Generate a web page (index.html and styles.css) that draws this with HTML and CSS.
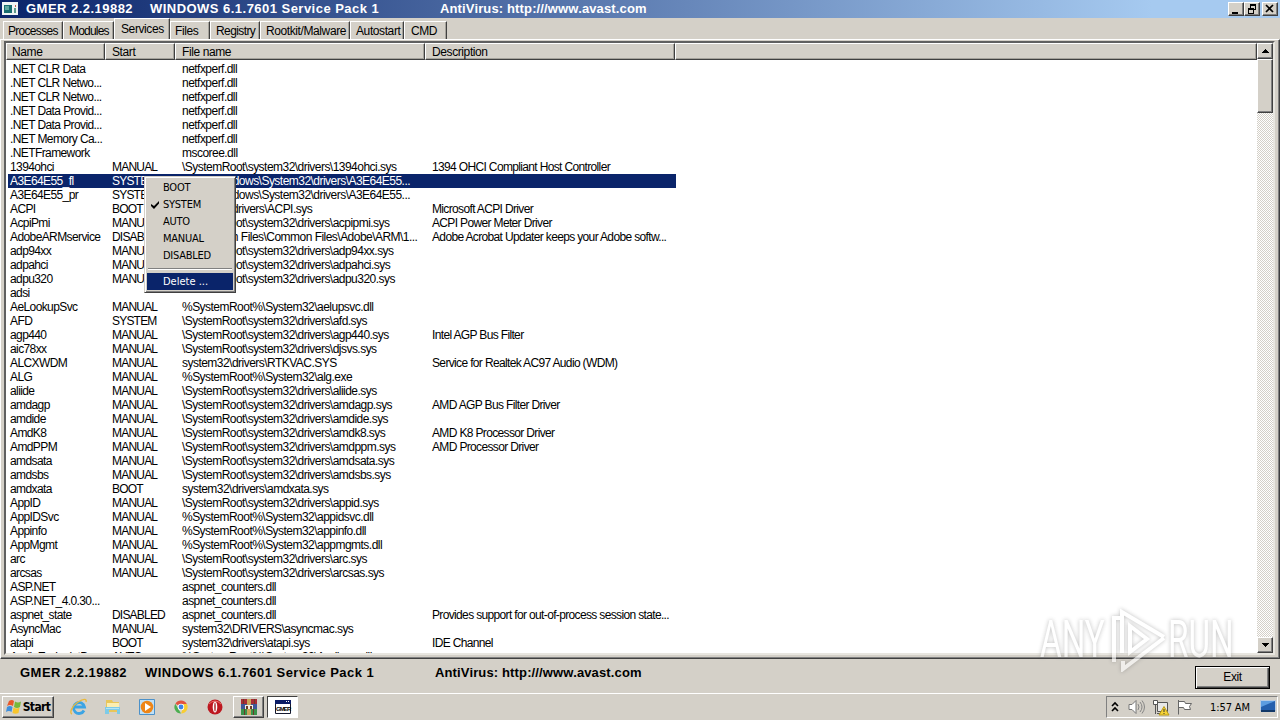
FILE: index.html
```html
<!DOCTYPE html>
<html lang="en">
<head>
  <meta charset="UTF-8">
  <title>GMER 2.2.19882</title>
  <link rel="stylesheet" href="styles.css">
</head>
<body>

<header class="titlebar">
  <svg class="app-icon" width="16" height="14" viewBox="0 0 16 14"><path fill="#eef4f4" d="M0 0h16v13H0z"/><path fill="#176d70" d="M2 3h8v8H2z"/><path fill="#5ea9a0" d="M3 4h4v4H3z"/><path fill="#c65a4a" d="M13 3h1v2h-1z"/><path fill="#5f9b8c" d="M12 6h2v5h-2z"/></svg>
  <span class="t-app">GMER 2.2.19882</span>
  <span class="t-os">WINDOWS 6.1.7601 Service Pack 1</span>
  <span class="t-av">AntiVirus: http:///www.avast.com</span>
  <div class="win-buttons">
    <button><svg width="12" height="10"><path d="M2 8h6v2H2z"/></svg></button>
    <button><svg width="12" height="10"><path d="M4 0h6v6H8v4H2V4h2zM5 2v2h3v1h1V2zM3 6v3h4V6z" fill-rule="evenodd"/></svg></button>
    <button class="close"><svg width="12" height="10"><path d="M2 1l7 7M9 1L2 8" stroke="#000" stroke-width="1.7"/></svg></button>
  </div>
</header>

<!-- Tabs -->
<nav class="tabs">
  <div class="tab processes">Processes</div>
  <div class="tab modules">Modules</div>
  <div class="tab services active">Services</div>
  <div class="tab files">Files</div>
  <div class="tab registry">Registry</div>
  <div class="tab rootkit">Rootkit/Malware</div>
  <div class="tab autostart">Autostart</div>
  <div class="tab cmd">CMD</div>
</nav>

<!-- Services list -->
<main class="page">
  <div class="listview">
    <div class="list">
      <div class="list-head">
        <div>Name</div><div>Start</div><div>File name</div><div>Description</div><div></div>
      </div>
      <div id="rows" class="rows"></div>
    </div>
    <div class="scrollbar">
      <div class="sb-btn"><svg width="7" height="4"><path d="M3 0h1v1h1v1h1v1h1v1H0V3h1V2h1V1h1z"/></svg></div>
      <div class="thumb"></div>
      <div class="sb-btn down"><svg width="7" height="4"><path d="M0 0h7v1H6v1H5v1H4v1H3V3H2V2H1V1H0z"/></svg></div>
    </div>
  </div>
</main>

<footer class="status">
  <span class="t-app">GMER 2.2.19882</span>
  <span class="t-os">WINDOWS 6.1.7601 Service Pack 1</span>
  <span class="t-av">AntiVirus: http:///www.avast.com</span>
  <button class="exit">Exit</button>
</footer>

<!-- Taskbar -->
<div class="taskbar">
  <button class="start">
    <svg width="16" height="16" viewBox="0 0 16 16"><path fill="#e8582a" d="M3 2q3-2 5 0L7 7Q4 5 1 7z"/><path fill="#77b83a" d="M9 2.500q3 2 6 0L14 8q-3 2-6 0z"/><path fill="#3f8fdc" d="M1 8q3-2 5.500 0L5.500 13Q3 11 0 13z"/><path fill="#f8c52c" d="M7.500 8.500q3 2 6 0L12.500 14q-3 1.500-6 0z"/></svg>
    Start
  </button>
  <div class="quick">
    <svg width="18" height="18" viewBox="0 0 18 18"><path d="M14 12.500A5.500 5.500 0 1 1 14.500 9H5" fill="none" stroke="#3ba4e4" stroke-width="2.800"/><path d="M2 16C-1 15 2 8 8 4s9-3 8 0" fill="none" stroke="#e9b93d" stroke-width="1.400"/></svg>
    <svg width="18" height="18" viewBox="0 0 18 18"><path fill="#e8c65a" d="M2 2h6l1 2h6v10H2z"/><path fill="#fbeeb0" d="M3 5h12v4H3z"/><path fill="#7dcbe8" d="M1 9h15v7h-3v-4H5v4H1z"/><path fill="#b5e4f5" d="M2 10h13v1H2z"/></svg>
    <svg width="18" height="18" viewBox="0 0 18 18"><path fill="#bfe0f7" stroke="#4c91c9" d="M1.500 1.500h15v15h-15z"/><circle cx="9" cy="9" r="6.300" fill="#ee8517"/><path fill="#fff" d="M7 5l6 4-6 4z"/></svg>
    <svg width="18" height="18" viewBox="0 0 18 18"><path fill="#e2523f" d="M9 9L3.400 5.700A6.500 6.500 0 0 1 14.800 6H9z"/><path fill="#4cae50" d="M3.300 5.700L9 15.500A6.500 6.500 0 0 1 3.300 5.700z"/><path fill="#f8cd32" d="M14.900 6A6.500 6.500 0 0 1 9 15.500L11.500 9 9 6z"/><circle cx="9" cy="9" r="3.200" fill="#fff"/><circle cx="9" cy="9" r="2.400" fill="#3c83e8"/></svg>
    <svg width="18" height="18" viewBox="0 0 18 18"><circle cx="9" cy="9" r="7.500" fill="#bd1820"/><path d="M3 6q6-6 12 0" stroke="#ec6e68" fill="none"/><ellipse cx="9" cy="9" rx="2.300" ry="5.500" fill="#fff"/><ellipse cx="9" cy="9" rx=".8" ry="4.500" fill="#ad3333"/></svg>
  </div>
  <button class="task"><svg width="18" height="18" viewBox="0 0 18 18"><path fill="#a72c35" d="M1 1h16v5H1z"/><path fill="#3d5799" d="M1 6h16v5H1z"/><path fill="#39934a" d="M1 11h16v6H1z"/><path fill="#c9a55b" d="M7 1h4v16H7z"/><path fill="#f2eee2" d="M5 7h8v4H5z"/><path fill="#6a3a2a" d="M6 8h2v3H6zM10 8h2v3h-2zM3 1h1v5H3zM14 1h1v5h-1zM4 11h1v6H4zM13 11h1v6h-1z"/></svg></button>
  <button class="task pressed"><svg width="18" height="18" viewBox="0 0 18 18"><path fill="#fff" stroke="#15192e" d="M1.500 2.500h15v13h-15z"/><path fill="#0b1c66" d="M1 2h16v4H1z"/><path fill="#fff" d="M12 3h1v1h-1zM14 3h1v1h-1z"/><text x="2" y="13" class="mini">GMER</text></svg></button>
  <div class="tray">
    <svg width="8" height="12"><path d="M1 5l3-3 3 3M1 10l3-3 3 3" fill="none" stroke="#000" stroke-width="1.600"/></svg>
    <svg class="sound" width="18" height="16" viewBox="0 0 18 16"><path fill="#fff" stroke="#777" d="M1 5.500h3l4-4v13l-4-4H1z"/><path d="M10 5q2 3 0 6M12 3q4 5 0 10M14 1.500q5 6.500 0 13" fill="none" stroke="#858585"/></svg>
    <svg class="net" width="18" height="17" viewBox="0 0 18 17"><path fill="#e8e8e8" stroke="#555" d="M5.500 3.500h10v9h-10z"/><path fill="#fff" stroke="#555" d="M1.500 1.500h4v4h-4zM3.500 6v9M5 14.500h6"/><path fill="#f6d338" stroke="#b99a16" d="M12 7.500l5 8.500H7z"/><path fill="#333" d="M11.500 10h1v3h-1zM11.500 14h1v1h-1z"/></svg>
    <svg class="flag" width="17" height="16" viewBox="0 0 17 16"><path fill="#fff" stroke="#666" d="M1.500 1v14.500M1.500 2.500h6l1 2h6l-2 3 1 3H7.500l-1-2h-5"/></svg>
    <span class="clock">1:57 AM</span>
    <svg class="desktop" width="16" height="14" viewBox="0 0 16 14"><path fill="#245fae" stroke="#b8cbe2" d="M.5.500h15v10H.5z"/><path fill="#5c9ce1" d="M1 1h14L1 7z"/><path fill="#123868" d="M1 10h14v2H1z"/></svg>
  </div>
</div>

<!-- Start type menu -->
<div class="menu">
  <div class="item">BOOT</div>
  <div class="item"><svg class="check" width="8" height="8"><path d="M0 3l3 2 5-5v2.500L3 8 0 5z"/></svg>SYSTEM</div>
  <div class="item">AUTO</div>
  <div class="item">MANUAL</div>
  <div class="item">DISABLED</div>
  <div class="sep"></div>
  <div class="item hot">Delete ...</div>
</div>

<div class="watermark">
  <span class="wm">ANY</span>
  <svg width="62" height="64" viewBox="0 0 62 64"><path d="M15 10H8v44M16 45V4l42 25M58 30L17 61V53M24 18v26l17-13z" fill="none" stroke="#fff" stroke-width="4"/></svg>
  <span class="wm">RUN</span>
</div>

<script>
  const R = "\\SystemRoot\\system32\\drivers\\";
  const S = "system32\\drivers\\";
  const P = "%SystemRoot%\\System32\\";
  const services = [
    [".NET CLR Data", "", "netfxperf.dll"],
    [".NET CLR Netwo...", "", "netfxperf.dll"],
    [".NET CLR Netwo...", "", "netfxperf.dll"],
    [".NET Data Provid...", "", "netfxperf.dll"],
    [".NET Data Provid...", "", "netfxperf.dll"],
    [".NET Memory Ca...", "", "netfxperf.dll"],
    [".NETFramework", "", "mscoree.dll"],
    ["1394ohci", "MANUAL", R + "1394ohci.sys", "1394 OHCI Compliant Host Controller"],
    ["A3E64E55_fl", "SYSTEM", "\\??\\C:\\Windows\\System32\\drivers\\A3E64E55..."],
    ["A3E64E55_pr", "SYSTEM", "\\??\\C:\\Windows\\System32\\drivers\\A3E64E55..."],
    ["ACPI", "BOOT", S + "ACPI.sys", "Microsoft ACPI Driver"],
    ["AcpiPmi", "MANUAL", R + "acpipmi.sys", "ACPI Power Meter Driver"],
    ["AdobeARMservice", "DISABLED", "C:\\Program Files\\Common Files\\Adobe\\ARM\\1...", "Adobe Acrobat Updater keeps your Adobe softw..."],
    ["adp94xx", "MANUAL", R + "adp94xx.sys"],
    ["adpahci", "MANUAL", R + "adpahci.sys"],
    ["adpu320", "MANUAL", R + "adpu320.sys"],
    ["adsi"],
    ["AeLookupSvc", "MANUAL", P + "aelupsvc.dll"],
    ["AFD", "SYSTEM", R + "afd.sys"],
    ["agp440", "MANUAL", R + "agp440.sys", "Intel AGP Bus Filter"],
    ["aic78xx", "MANUAL", R + "djsvs.sys"],
    ["ALCXWDM", "MANUAL", S + "RTKVAC.SYS", "Service for Realtek AC97 Audio (WDM)"],
    ["ALG", "MANUAL", P + "alg.exe"],
    ["aliide", "MANUAL", R + "aliide.sys"],
    ["amdagp", "MANUAL", R + "amdagp.sys", "AMD AGP Bus Filter Driver"],
    ["amdide", "MANUAL", R + "amdide.sys"],
    ["AmdK8", "MANUAL", R + "amdk8.sys", "AMD K8 Processor Driver"],
    ["AmdPPM", "MANUAL", R + "amdppm.sys", "AMD Processor Driver"],
    ["amdsata", "MANUAL", R + "amdsata.sys"],
    ["amdsbs", "MANUAL", R + "amdsbs.sys"],
    ["amdxata", "BOOT", S + "amdxata.sys"],
    ["AppID", "MANUAL", R + "appid.sys"],
    ["AppIDSvc", "MANUAL", P + "appidsvc.dll"],
    ["Appinfo", "MANUAL", P + "appinfo.dll"],
    ["AppMgmt", "MANUAL", P + "appmgmts.dll"],
    ["arc", "MANUAL", R + "arc.sys"],
    ["arcsas", "MANUAL", R + "arcsas.sys"],
    ["ASP.NET", "", "aspnet_counters.dll"],
    ["ASP.NET_4.0.30...", "", "aspnet_counters.dll"],
    ["aspnet_state", "DISABLED", "aspnet_counters.dll", "Provides support for out-of-process session state..."],
    ["AsyncMac", "MANUAL", "system32\\DRIVERS\\asyncmac.sys"],
    ["atapi", "BOOT", S + "atapi.sys", "IDE Channel"],
    ["AudioEndpointBu...", "AUTO", P + "Audiosrv.dll"]
  ];

  const rows = document.getElementById("rows");
  services.forEach(s => {
    const row = document.createElement("div");
    row.className = s[0] === "A3E64E55_fl" ? "row selected" : "row";
    for (let i = 0; i < 4; i++) {
      const cell = document.createElement("span");
      cell.textContent = s[i] || "";
      row.appendChild(cell);
    }
    rows.appendChild(row);
  });
</script>

</body>
</html>
```
FILE: styles.css
```css
* { box-sizing: border-box; }
body { margin: 0; width: 1280px; height: 720px; overflow: hidden; display: flex; flex-direction: column; background: #d4d0c8; color: #000; font: 12px/14px "Liberation Sans", sans-serif; letter-spacing: -0.4px; white-space: nowrap; }
svg { display: block; flex: none; }
button { font: inherit; letter-spacing: inherit; color: #000; padding: 0; border: 1px solid; border-color: #fff #404040 #404040 #fff; box-shadow: inset -1px -1px #808080; background: #d4d0c8; display: flex; align-items: center; justify-content: center; }

.titlebar { height: 18px; flex: none; display: flex; align-items: center; padding: 0 2px; color: #fff; background: linear-gradient(90deg, #0a246a, #a6caf0 90%); }
.app-icon { margin-right: 8px; }
.t-app, .t-os, .t-av { font: bold 13px/16px "Liberation Sans", sans-serif; letter-spacing: 0.47px; }
.t-app { width: 124px; }
.t-os { width: 290px; }
.t-av { letter-spacing: 0.14px; }
.win-buttons { display: flex; margin-left: auto; }
.win-buttons button { width: 16px; height: 14px; }
.win-buttons .close { margin-left: 2px; }

.tabs { height: 21px; flex: none; display: flex; align-items: flex-end; padding-left: 3px; }
.tab { height: 18px; padding: 2px 0 0 5px; border-top: 1px solid #fff; border-left: 1px solid #fff; border-right: 1px solid #404040; box-shadow: inset -1px 0 #a5a29b; }
.tab.active { height: 21px; padding: 3px 0 0 6px; }
.tab.processes { width: 60px; padding-left: 4px; letter-spacing: -0.7px; }
.modules { width: 51px; letter-spacing: -0.8px; }
.services { width: 56px; }
.tab.files { width: 40px; padding-left: 4px; }
.registry { width: 50px; letter-spacing: -0.6px; }
.rootkit { width: 90px; }
.autostart { width: 54px; }
.tab.cmd { width: 43px; padding-left: 6px; }

.page { height: 620px; flex: none; padding: 1px 4px 3px 3px; border: 1px solid; border-color: #fff #404040 #404040 #fff; box-shadow: inset -1px -1px #808080; }
.listview { height: 614px; display: flex; border: 2px solid; border-color: #606060 #e8e6e0 #e8e6e0 #606060; background: #fff; }
.list { flex: 1; overflow: hidden; height: 610px; }
.list-head { height: 17px; display: grid; grid-template-columns: 99px 70px 250px 250px 1fr; background: #d4d0c8; }
.list-head div { padding: 1px 0 0 6px; border: 1px solid; border-color: #fff #404040 #404040 #fff; box-shadow: inset -1px -1px #a5a29b; }
.list-head div:first-child { padding-left: 5px; }
.rows { padding: 2px 0 0 2px; }
.row { width: 668px; height: 14px; display: grid; grid-template-columns: 102px 70px 250px 246px; padding-left: 2px; letter-spacing: -0.53px; }
.row span:first-child { letter-spacing: -0.6px; }
.row span:nth-child(2) { letter-spacing: -0.8px; }
.row span:last-child { letter-spacing: -0.65px; }
.row.selected { background: #0a246a; color: #fff; }

.scrollbar { width: 16px; display: flex; flex-direction: column; background: repeating-conic-gradient(#fff 0 25%, #d4d0c8 0 50%) 0 0 / 2px 2px; }
.sb-btn, .thumb { border: 1px solid; border-color: #fff #404040 #404040 #fff; box-shadow: inset -1px -1px #808080; background: #d4d0c8; }
.sb-btn { height: 16px; display: flex; align-items: center; justify-content: center; }
.thumb { height: 54px; }
.down { margin-top: auto; }

.status { height: 34px; flex: none; display: flex; align-items: center; padding: 0 10px 6px 20px; }
.status .t-app { width: 125px; }
.exit { width: 75px; height: 23px; margin: 9px 0 0 auto; flex: none; border-color: #000; box-shadow: inset 1px 1px #fff, inset -1px -1px #404040, inset -2px -2px #808080; padding-bottom: 1px; }

.taskbar { height: 27px; flex: none; display: flex; align-items: center; border-top: 1px solid #fff; padding: 0 2px; }
.start { width: 52px; height: 22px; gap: 1px; font: bold 12px "DejaVu Sans Condensed", "DejaVu Sans", sans-serif; letter-spacing: -0.6px; }
.quick { display: flex; gap: 16px; margin: 0 9px 0 16px; }
.task { width: 31px; height: 22px; }
.task.pressed { margin-left: 3px; background: #fff; border-color: #404040 #fff #fff #404040; box-shadow: none; }
.mini { font: bold 6px "Liberation Sans", sans-serif; letter-spacing: -0.9px; }
.tray { width: 172px; height: 22px; margin-left: auto; display: flex; align-items: center; padding-left: 4px; border: 1px solid; border-color: #808080 #fff #fff #808080; }
.sound { margin-left: 9px; }
.net { margin-left: 6px; }
.flag { margin-left: 7px; }
.clock { width: 50px; margin-left: 16px; font: 11px "DejaVu Sans Condensed", "DejaVu Sans", sans-serif; letter-spacing: -0.1px; }

.menu { position: absolute; left: 144px; top: 176px; width: 92px; height: 117px; padding: 2px; background: #d4d0c8; border: 1px solid; border-color: #d4d0c8 #404040 #404040 #d4d0c8; box-shadow: inset 1px 1px #fff, inset -1px -1px #808080; font: 11px/17px "DejaVu Sans Condensed", "DejaVu Sans", sans-serif; letter-spacing: -0.25px; }
.item { position: relative; height: 17px; padding-left: 16px; }
.item.hot { background: #0a246a; color: #fff; letter-spacing: 0; }
.check { position: absolute; left: 4px; top: 5px; }
.sep { height: 2px; margin: 4px 1px 3px; border-top: 1px solid #808080; border-bottom: 1px solid #fff; }

.watermark { position: absolute; left: 1040px; top: 608px; width: 200px; height: 64px; display: flex; align-items: center; opacity: 0.65; filter: drop-shadow(0 0 2px rgba(90, 90, 90, 0.6)); }
.wm { width: 66px; font: 51px/64px Roboto, sans-serif; letter-spacing: 0; color: #fff; transform: scaleX(0.65); transform-origin: 0 0; }
```
